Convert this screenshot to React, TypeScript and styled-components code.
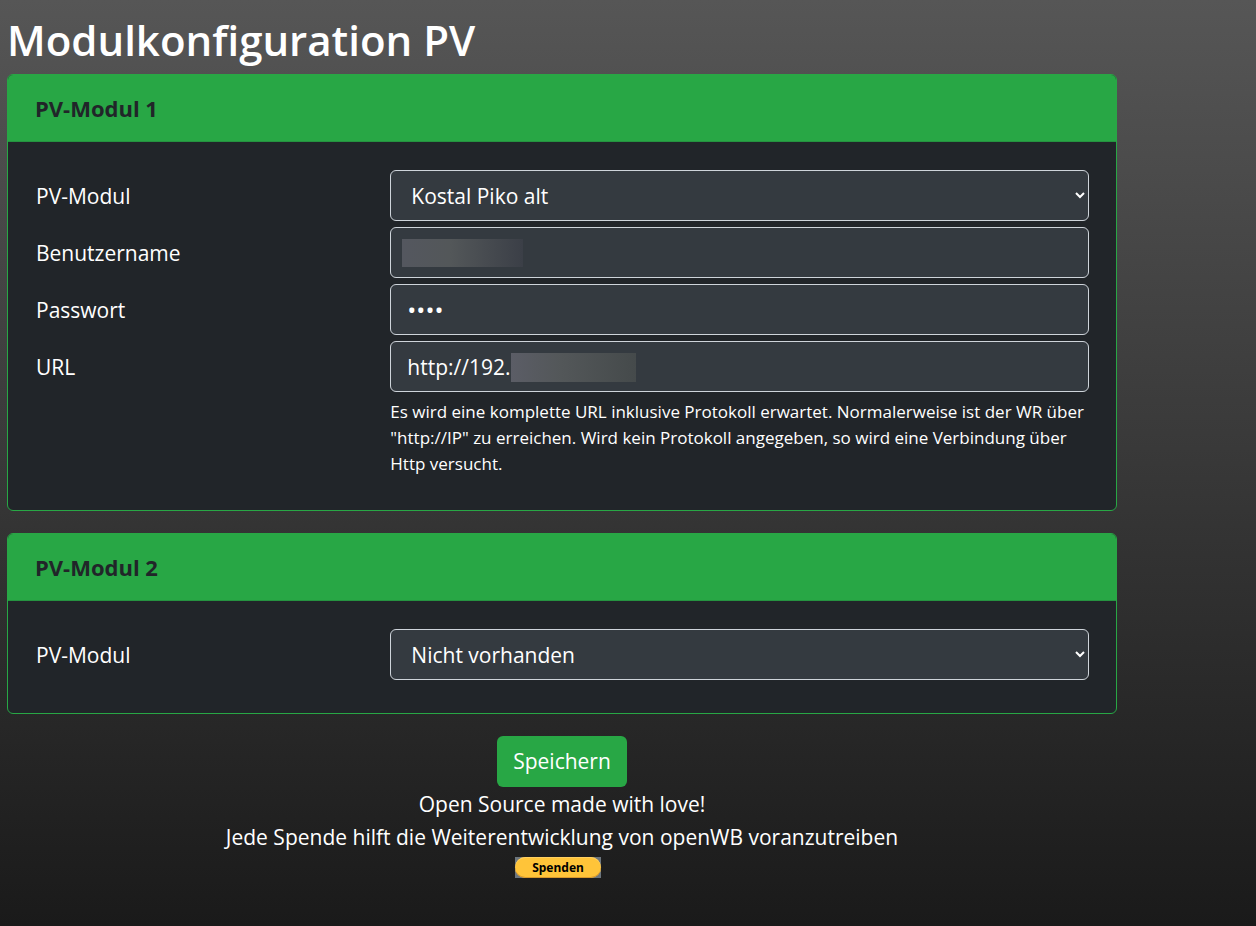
import React from 'react';
import styled, { createGlobalStyle } from 'styled-components';

const GlobalStyle = createGlobalStyle`
  *, *::before, *::after { box-sizing: border-box; }
  html { min-height: 100%; background: linear-gradient(#565656, #1a1a1a) no-repeat #1a1a1a; }
  body {
    margin: 0;
    color: #fff;
    font-family: "Segoe UI", "Open Sans", "Noto Sans", sans-serif;
    font-size: 21px;
    line-height: 33px;
  }
`;

const Page = styled.main`
  max-width: 1124px;
  padding: 12px 7px 0;
`;

const Title = styled.h1`
  margin: 0 0 6px;
  font-size: 42px;
  font-weight: 600;
  line-height: 56px;
`;

const Card = styled.section`
  margin-bottom: 22px;
  border: 1px solid #28a745;
  border-radius: 6px;
  background: #212529;
  overflow: hidden;
`;

const CardHeader = styled.h2`
  margin: 0;
  padding: 17px 27px 16px;
  border-bottom: 1px solid #259340;
  background: #28a745;
  color: #212529;
  font-size: 22px;
  font-weight: 700;
  line-height: 33px;
`;

const CardBody = styled.div`
  padding: 28px 27px 27px 28px;
`;

const Row = styled.div`
  display: grid;
  grid-template-columns: minmax(0, 1fr) minmax(0, 2fr);
  column-gap: 5px;
  margin-bottom: 6px;
`;

const Label = styled.label`
  padding: 10px 0 8px;
`;

const Field = styled.div`
  position: relative;
`;

const controlStyle = `
  display: block;
  width: 100%;
  height: 51px;
  padding: 8px 16px;
  border: 1px solid #ced4da;
  border-radius: 6px;
  background-color: #343a40;
  color: #fff;
  font: inherit;
`;

const Input = styled.input`
  ${controlStyle}
  &[type='password'] { font-size: 24px; }
`;

const Select = styled.select`
  ${controlStyle}
  padding-right: 1px;
`;

const Redaction = styled.span<{ $left: number; $width: number; $height: number; $from: string; $to: string }>`
  position: absolute;
  top: 12px;
  left: ${(p) => p.$left}px;
  width: ${(p) => p.$width}px;
  height: ${(p) => p.$height}px;
  background: linear-gradient(90deg, ${(p) => p.$from}, #535759 40%, ${(p) => p.$to});
`;

const Help = styled.p`
  margin: 7px 0 0;
  font-size: 17px;
  line-height: 26px;
`;

const Actions = styled.div`
  display: flex;
  flex-direction: column;
  align-items: center;
  text-align: center;
`;

const SaveButton = styled.button`
  height: 51px;
  margin-bottom: 1px;
  padding: 0 16px;
  border: 0;
  border-radius: 6px;
  background: #28a745;
  color: #fff;
  font: inherit;
  cursor: pointer;
`;

const Line = styled.p`
  margin: 0;
`;

const DonateButton = styled.button`
  width: 86px;
  height: 21px;
  margin: 3px 8px 48px 0;
  padding: 0;
  border: 0;
  background: #6c757d;
  cursor: pointer;
`;

const Pill = styled.span`
  display: block;
  height: 21px;
  border-radius: 11px;
  background: #ffc439;
  box-shadow: inset 0 1px #ffd061, inset 0 -1px #d9992c;
  color: #000;
  font-family: "Noto Sans", sans-serif;
  font-size: 12px;
  font-weight: 700;
  line-height: 21px;
`;

export default function App() {
  return (
    <>
      <GlobalStyle />
      <Page>
        <Title>Modulkonfiguration PV</Title>
        <form onSubmit={(e) => e.preventDefault()}>
          <Card>
            <CardHeader>PV-Modul 1</CardHeader>
            <CardBody>
              <Row>
                <Label htmlFor="modul1">PV-Modul</Label>
                <Field>
                  <Select id="modul1" defaultValue="piko">
                    <option value="piko">Kostal Piko alt</option>
                  </Select>
                </Field>
              </Row>
              <Row>
                <Label htmlFor="user">Benutzername</Label>
                <Field>
                  <Input id="user" type="text" />
                  <Redaction $left={12} $width={121} $height={28} $from="#54575f" $to="#3b3f47" />
                </Field>
              </Row>
              <Row>
                <Label htmlFor="password">Passwort</Label>
                <Field>
                  <Input id="password" type="password" defaultValue="abcd" />
                </Field>
              </Row>
              <Row>
                <Label htmlFor="url">URL</Label>
                <Field>
                  <Input id="url" type="text" defaultValue="http://192." />
                  <Redaction $left={121} $width={125} $height={29} $from="#5b5d66" $to="#454a4b" />
                  <Help>
                    Es wird eine komplette URL inklusive Protokoll erwartet. Normalerweise ist der WR über
                    "http://IP" zu erreichen. Wird kein Protokoll angegeben, so wird eine Verbindung über
                    Http versucht.
                  </Help>
                </Field>
              </Row>
            </CardBody>
          </Card>
          <Card>
            <CardHeader>PV-Modul 2</CardHeader>
            <CardBody>
              <Row>
                <Label htmlFor="modul2">PV-Modul</Label>
                <Field>
                  <Select id="modul2" defaultValue="none">
                    <option value="none">Nicht vorhanden</option>
                  </Select>
                </Field>
              </Row>
            </CardBody>
          </Card>
          <Actions>
            <SaveButton type="submit">Speichern</SaveButton>
            <Line>Open Source made with love!</Line>
            <Line>Jede Spende hilft die Weiterentwicklung von openWB voranzutreiben</Line>
            <DonateButton type="button">
              <Pill>Spenden</Pill>
            </DonateButton>
          </Actions>
        </form>
      </Page>
    </>
  );
}
